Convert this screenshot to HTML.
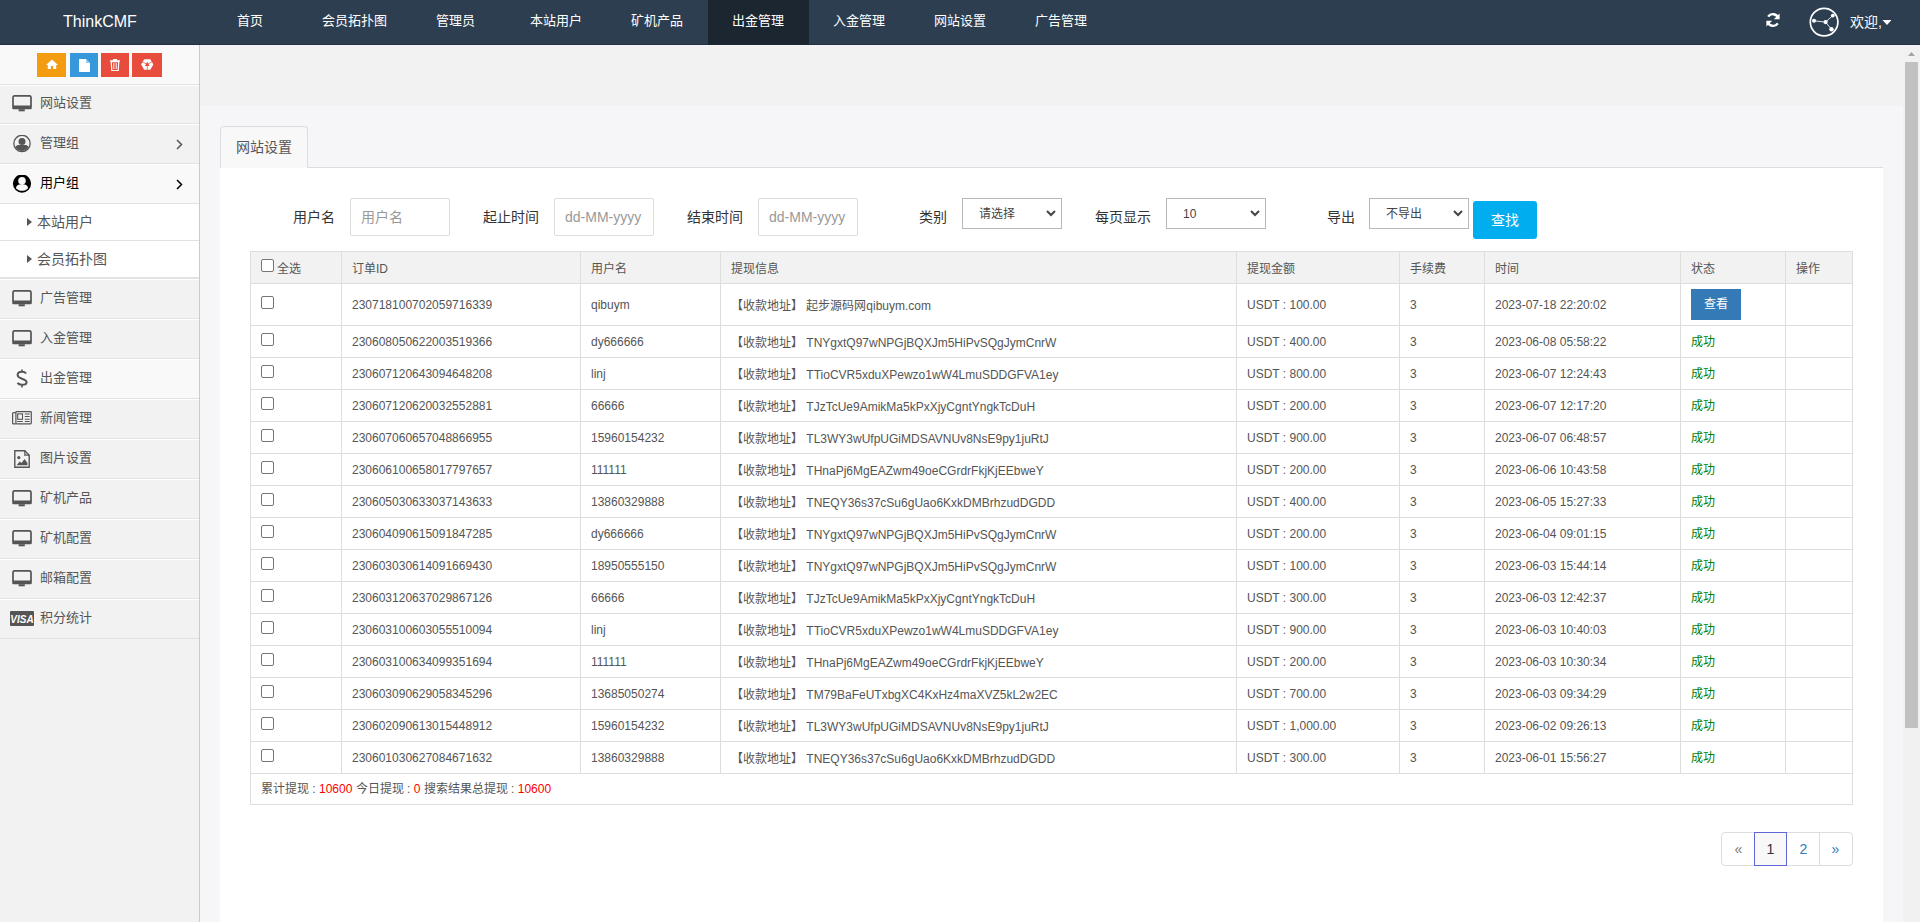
<!DOCTYPE html>
<html lang="zh-CN"><head><meta charset="utf-8"><title>ThinkCMF</title>
<style>
*{box-sizing:border-box;margin:0;padding:0}
html,body{width:1920px;height:922px;overflow:hidden;background:#f6f6f8;font-family:"Liberation Sans",sans-serif;color:#555}
.abs{position:absolute}
#nav{position:absolute;left:0;top:0;width:1920px;height:45px;background:#2c3e50;border-bottom:1px solid #213044}
#nav .t{position:absolute;top:0;height:44px;line-height:41px;color:#fff;font-size:13px;font-weight:500;white-space:nowrap}
#nav .act{position:absolute;left:708px;top:0;width:101px;height:45px;background:#1b2631}
#brand{position:absolute;left:63px;top:0;line-height:43px;font-size:16px;color:#fff}
#side{position:absolute;left:0;top:45px;width:200px;height:877px;background:#f2f2f2;border-right:1px solid #cbcbcb}
#side .top{position:absolute;left:0;top:0;width:199px;height:40px;background:#f9f9f9;border-bottom:1px solid #e0e0e0}
.sb{position:absolute;top:8px;height:24px;color:#fff}
.mi{position:absolute;left:0;width:199px;border-top:1px solid #fff;border-bottom:1px solid #e2e2e2;font-size:13px;color:#555}
.mi .tx{position:absolute;left:40px;white-space:nowrap}
.mi .ic{position:absolute;left:12px}
.sub{position:absolute;left:0;width:199px;background:#fff;border-bottom:1px solid #e2e2e2;font-size:14px;color:#555}
#band{position:absolute;left:200px;top:46px;width:1703px;height:60px;background:#f2f2f2}
#tab{position:absolute;left:220px;top:126px;width:88px;height:42px;background:#f8f8f8;border:1px solid #dcdcdc;border-bottom:none;border-radius:4px 4px 0 0;font-size:14px;color:#555;line-height:40px;padding-left:15px}
#tabline{position:absolute;left:307px;top:167px;width:1576px;height:1px;background:#dcdcdc}
#panel{position:absolute;left:220px;top:168px;width:1663px;height:760px;background:#fff}
.lbl{position:absolute;font-size:14px;color:#333;white-space:nowrap}
.inp{position:absolute;top:198px;width:100px;height:38px;border:1px solid #ddd;border-radius:2px;background:#fff;font-size:14px;color:#999;padding-left:10px;line-height:36px}
.sel{position:absolute;top:198px;width:100px;height:31px;border:1px solid #b9b9b9;background:#fff;font-size:12px;color:#444;line-height:29px}
.sel .v{position:absolute;top:1px}
.sel svg{position:absolute;right:5px;top:11px}
#go{position:absolute;left:1473px;top:201px;width:64px;height:38px;background:#00aeef;border-radius:3px;color:#fff;font-size:14px;font-weight:500;line-height:38px;text-align:center}
table{position:absolute;left:250px;top:251px;border-collapse:collapse;table-layout:fixed;font-size:12px;color:#555}
td,th{border:1px solid #dedede;padding:0 10px;text-align:left;font-weight:normal;white-space:nowrap;vertical-align:middle;overflow:hidden}
th{background:#f2f2f2;height:32px;color:#555}
td{height:32px}
.cb{display:inline-block;width:13px;height:13px;border:1px solid #767676;border-radius:2px;background:#fff;vertical-align:middle;position:relative;top:-3px}
.ok{color:#008000;position:relative;top:-1px}
.btn{display:inline-block;width:50px;height:31px;background:#337ab7;color:#fff;font-weight:500;text-align:center;line-height:31px;font-size:12px}
#foot td{height:31px;padding-left:10px;padding-bottom:3px}
.red{color:#f00}
#pg{position:absolute;left:1721px;top:832px;width:132px;height:34px;border:1px solid #ddd;border-radius:4px;background:#fff;font-size:14px}
#pg .pc{position:absolute;top:-1px;width:33px;height:34px;text-align:center;line-height:35px;color:#337ab7}
#pg .sep{position:absolute;top:-1px;width:1px;height:34px;background:#ddd}
#pg .act{border:1px solid #6066d8;background:#f8f8f8;line-height:33px;width:34px}
#sbar{position:absolute;left:1903px;top:46px;width:17px;height:876px;background:#f1f1f1}
#thumb{position:absolute;left:2px;top:16px;width:13px;height:666px;background:#c1c1c1}
</style></head><body>

<div id="nav"><div class="act"></div><div id="brand">ThinkCMF</div>
<div class="t" style="left:237.0px">首页</div>
<div class="t" style="left:321.9px">会员拓扑图</div>
<div class="t" style="left:435.6px">管理员</div>
<div class="t" style="left:530.2px">本站用户</div>
<div class="t" style="left:631.1px">矿机产品</div>
<div class="t" style="left:732.4px">出金管理</div>
<div class="t" style="left:833.2px">入金管理</div>
<div class="t" style="left:934.3px">网站设置</div>
<div class="t" style="left:1035.2px">广告管理</div>
<svg class="abs" style="left:1765px;top:12px" width="16" height="16" viewBox="0 0 16 16"><path d="M13.2 6.2A5.6 5.6 0 0 0 3.2 4.6" fill="none" stroke="#fff" stroke-width="2.4"/><path d="M14.6 1.4v5.8h-5.8z" fill="#fff"/><path d="M2.8 9.8a5.6 5.6 0 0 0 10 1.6" fill="none" stroke="#fff" stroke-width="2.4"/><path d="M1.4 14.6v-5.8h5.8z" fill="#fff"/></svg>
<svg class="abs" style="left:1808px;top:6px" width="32" height="32" viewBox="0 0 32 32"><circle cx="16.1" cy="16.1" r="13.8" fill="none" stroke="#fff" stroke-width="1.7"/><path d="M6 14.8L17.6 16.1L24.8 9.6M17.6 16.1L23.5 23.3" stroke="#fff" stroke-width="1" fill="none" opacity="0.85"/><circle cx="6" cy="14.8" r="2" fill="#fff"/><circle cx="17.6" cy="16.1" r="2.1" fill="#fff"/><circle cx="24.8" cy="9.6" r="1.9" fill="#fff"/><circle cx="23.5" cy="23.3" r="2.2" fill="#fff"/></svg>
<div class="t" style="left:1850px;top:2px;font-size:14px">欢迎,</div>
<svg class="abs" style="left:1882px;top:20px" width="9" height="6" viewBox="0 0 8 6"><path d="M0 0h9L4.5 5z" fill="#fff"/></svg>

</div>
<div id="side"><div class="top">
<div class="sb" style="left:37px;width:29px;background:#f39c12"><svg class="abs" style="left:9px;top:6px" width="12" height="10" viewBox="0 0 12 10"><path d="M6 0.5L0 6h1.8v4h3V7h2.4v3h3V6H12z" fill="#fff"/></svg></div>
<div class="sb" style="left:70px;width:28px;background:#3498db"><svg class="abs" style="left:8.5px;top:5.5px" width="11" height="13" viewBox="0 0 11 13"><path d="M0 0h7l4 4v9H0z" fill="#fff"/><path d="M7 0v4h4" fill="#3498db" opacity="0.5"/></svg></div>
<div class="sb" style="left:101px;width:28px;background:#e74c3c"><svg class="abs" style="left:9px;top:6px" width="10" height="12" viewBox="0 0 10 12"><path d="M0 1.8h10M3.5 1.8V0.6h3v1.2" stroke="#fff" stroke-width="1.2" fill="none"/><path d="M1.2 2.6h7.6l-0.6 9H1.8z" fill="none" stroke="#fff" stroke-width="1.2"/><path d="M3.8 4v6M6.2 4v6" stroke="#fff" stroke-width="1"/></svg></div>
<div class="sb" style="left:132px;width:30px;background:#e74c3c"><svg class="abs" style="left:8.5px;top:5.5px" width="13" height="12" viewBox="0 0 13 12"><polygon points="12.35,5.50 9.30,10.78 3.20,10.78 0.15,5.50 3.20,0.22 9.30,0.22" fill="#fff"/><path d="M6.25 5.50L6.25 12.00" stroke="#e74c3c" stroke-width="0.7"/><path d="M6.25 5.50L0.62 2.25" stroke="#e74c3c" stroke-width="0.7"/><path d="M6.25 5.50L11.88 2.25" stroke="#e74c3c" stroke-width="0.7"/><path d="M6.25 2.80L3.85 7.00H8.65z" fill="#e74c3c"/></svg></div>
</div>
<div class="mi" style="top:40px;height:39px;color:#555"><div class="ic" style="top:9px"><svg style="position:relative;top:-0.5px" width="20" height="17" viewBox="0 0 20 17"><path d="M1 11V2.4a1.6 1.6 0 0 1 1.6-1.6h14.8a1.6 1.6 0 0 1 1.6 1.6V11" fill="none" stroke="#555" stroke-width="1.7"/><path d="M0.2 10.4h19.6v2.6a1.3 1.3 0 0 1-1.3 1.3H1.5A1.3 1.3 0 0 1 0.2 13z" fill="#555"/><rect x="6.6" y="14.2" width="6.2" height="2.1" fill="#555"/></svg></div><div class="tx" style="top:-2px;line-height:37px">网站设置</div></div>
<div class="mi" style="top:79px;height:40px;color:#555"><div class="ic" style="top:10px"><svg width="20" height="20" viewBox="0 0 20 20"><circle cx="10" cy="8.45" r="8.15" fill="none" stroke="#555" stroke-width="1.3"/><circle cx="10" cy="6.4" r="3.5" fill="#555"/><path d="M3.6 12.4C3.8 11 4.8 10.1 6.3 10.1H13.7C15.2 10.1 16.2 11 16.4 12.4A7.6 7.6 0 0 1 3.6 12.4Z" fill="#555"/></svg></div><div class="tx" style="top:-1px;line-height:38px">管理组</div><svg class="abs" style="left:176px;top:14px" width="7" height="11" viewBox="0 0 7 11"><path d="M1 1l4.5 4.5L1 10" stroke="#555" stroke-width="1.5" fill="none"/></svg></div>
<div class="mi" style="top:119px;height:40px;background:#f9f9f9;color:#000"><div class="ic" style="top:10px"><svg width="20" height="20" viewBox="0 0 20 20"><path fill="#000" fill-rule="evenodd" d="M10 -0.5a9.1 9.1 0 1 1 0 18.2a9.1 9.1 0 1 1 0-18.2zM10 2a3.8 3.8 0 1 0 0 7.6a3.8 3.8 0 1 0 0-7.6zM3.9 13.2C4.3 10.9 5.9 9.6 7.6 9.6H12.4C14.1 9.6 15.7 10.9 16.1 13.2C14.6 14.9 12.4 15.8 10 15.8C7.6 15.8 5.4 14.9 3.9 13.2Z"/></svg></div><div class="tx" style="top:-1px;line-height:38px">用户组</div><svg class="abs" style="left:176px;top:14px" width="7" height="11" viewBox="0 0 7 11"><path d="M1 1l4.5 4.5L1 10" stroke="#000" stroke-width="1.5" fill="none"/></svg></div>
<div class="sub" style="top:159px;height:37px"><svg class="abs" style="left:27px;top:14px" width="5" height="8" viewBox="0 0 5 8"><path d="M0 0l5 4-5 4z" fill="#555"/></svg><div class="abs" style="left:37px;top:0;line-height:36px">本站用户</div></div>
<div class="sub" style="top:196px;height:38px;border-bottom:2px solid #e2e2e2"><svg class="abs" style="left:27px;top:14px" width="5" height="8" viewBox="0 0 5 8"><path d="M0 0l5 4-5 4z" fill="#555"/></svg><div class="abs" style="left:37px;top:0;line-height:36px">会员拓扑图</div></div>
<div class="mi" style="top:234px;height:40px;color:#555"><div class="ic" style="top:10px"><svg style="position:relative;top:-0.5px" width="20" height="17" viewBox="0 0 20 17"><path d="M1 11V2.4a1.6 1.6 0 0 1 1.6-1.6h14.8a1.6 1.6 0 0 1 1.6 1.6V11" fill="none" stroke="#555" stroke-width="1.7"/><path d="M0.2 10.4h19.6v2.6a1.3 1.3 0 0 1-1.3 1.3H1.5A1.3 1.3 0 0 1 0.2 13z" fill="#555"/><rect x="6.6" y="14.2" width="6.2" height="2.1" fill="#555"/></svg></div><div class="tx" style="top:-1px;line-height:38px">广告管理</div></div>
<div class="mi" style="top:274px;height:40px;color:#555"><div class="ic" style="top:10px"><svg style="position:relative;top:-0.5px" width="20" height="17" viewBox="0 0 20 17"><path d="M1 11V2.4a1.6 1.6 0 0 1 1.6-1.6h14.8a1.6 1.6 0 0 1 1.6 1.6V11" fill="none" stroke="#555" stroke-width="1.7"/><path d="M0.2 10.4h19.6v2.6a1.3 1.3 0 0 1-1.3 1.3H1.5A1.3 1.3 0 0 1 0.2 13z" fill="#555"/><rect x="6.6" y="14.2" width="6.2" height="2.1" fill="#555"/></svg></div><div class="tx" style="top:-1px;line-height:38px">入金管理</div></div>
<div class="mi" style="top:314px;height:40px;background:#f9f9f9;color:#555"><div class="ic" style="top:10px"><svg width="19" height="19" viewBox="0 0 19 19" style="overflow:visible"><path d="M14.2 3.5C13.2 2.2 12 1.7 10 1.7C7.4 1.7 5.6 3 5.6 5C5.6 7.4 8 8 10 8.7C12.6 9.6 14.6 10.4 14.6 12.2C14.6 14 12.7 14.8 10 14.8C7.8 14.8 6.4 14.2 5.5 12.9" fill="none" stroke="#555" stroke-width="2"/><path d="M10 -0.6V1.7M10 14.8V17.5" stroke="#555" stroke-width="1.6"/></svg></div><div class="tx" style="top:-1px;line-height:38px">出金管理</div></div>
<div class="mi" style="top:354px;height:40px;color:#555"><div class="ic" style="top:10px"><svg style="position:relative;left:0;top:1px" width="21" height="15" viewBox="0 0 21 15"><rect x="3.9" y="0.6" width="15.4" height="12.3" rx="0.8" fill="none" stroke="#555" stroke-width="1.2"/><path d="M3.9 1.6H1.6Q0.6 1.6 0.6 2.6V11.9Q0.6 12.9 1.6 12.9H3.9" fill="none" stroke="#555" stroke-width="1.2"/><rect x="5.7" y="2.9" width="4.8" height="5.4" fill="none" stroke="#555" stroke-width="1.1"/><path d="M12.8 3H17.7M12.8 5.5H17.7M12.8 8.2H17.7M12.8 10.5H17.7M5.2 10.5H10.8" stroke="#555" stroke-width="1.1"/></svg></div><div class="tx" style="top:-1px;line-height:38px">新闻管理</div></div>
<div class="mi" style="top:394px;height:40px;color:#555"><div class="ic" style="top:10px"><svg style="position:relative;left:2px;top:0px" width="16" height="18" viewBox="0 0 16 18"><path d="M0.8 0.8h10l4.4 4.4v12H0.8z" fill="none" stroke="#555" stroke-width="1.4"/><path d="M10.8 0.8v4.4h4.4" fill="none" stroke="#555" stroke-width="1.2"/><circle cx="4.8" cy="7.6" r="1.6" fill="#555"/><path d="M2.6 15.2l3.2-3.6 1.6 1.3 3.2-3.8 2.8 3.8v2.3z" fill="#555"/></svg></div><div class="tx" style="top:-1px;line-height:38px">图片设置</div></div>
<div class="mi" style="top:434px;height:40px;color:#555"><div class="ic" style="top:10px"><svg style="position:relative;top:-0.5px" width="20" height="17" viewBox="0 0 20 17"><path d="M1 11V2.4a1.6 1.6 0 0 1 1.6-1.6h14.8a1.6 1.6 0 0 1 1.6 1.6V11" fill="none" stroke="#555" stroke-width="1.7"/><path d="M0.2 10.4h19.6v2.6a1.3 1.3 0 0 1-1.3 1.3H1.5A1.3 1.3 0 0 1 0.2 13z" fill="#555"/><rect x="6.6" y="14.2" width="6.2" height="2.1" fill="#555"/></svg></div><div class="tx" style="top:-1px;line-height:38px">矿机产品</div></div>
<div class="mi" style="top:474px;height:40px;color:#555"><div class="ic" style="top:10px"><svg style="position:relative;top:-0.5px" width="20" height="17" viewBox="0 0 20 17"><path d="M1 11V2.4a1.6 1.6 0 0 1 1.6-1.6h14.8a1.6 1.6 0 0 1 1.6 1.6V11" fill="none" stroke="#555" stroke-width="1.7"/><path d="M0.2 10.4h19.6v2.6a1.3 1.3 0 0 1-1.3 1.3H1.5A1.3 1.3 0 0 1 0.2 13z" fill="#555"/><rect x="6.6" y="14.2" width="6.2" height="2.1" fill="#555"/></svg></div><div class="tx" style="top:-1px;line-height:38px">矿机配置</div></div>
<div class="mi" style="top:514px;height:40px;color:#555"><div class="ic" style="top:10px"><svg style="position:relative;top:-0.5px" width="20" height="17" viewBox="0 0 20 17"><path d="M1 11V2.4a1.6 1.6 0 0 1 1.6-1.6h14.8a1.6 1.6 0 0 1 1.6 1.6V11" fill="none" stroke="#555" stroke-width="1.7"/><path d="M0.2 10.4h19.6v2.6a1.3 1.3 0 0 1-1.3 1.3H1.5A1.3 1.3 0 0 1 0.2 13z" fill="#555"/><rect x="6.6" y="14.2" width="6.2" height="2.1" fill="#555"/></svg></div><div class="tx" style="top:-1px;line-height:38px">邮箱配置</div></div>
<div class="mi" style="top:554px;height:40px;color:#555"><div class="ic" style="top:10px"><svg style="position:relative;left:-2px;top:1px" width="24" height="15" viewBox="0 0 24 15"><rect x="0" y="0" width="24" height="15" rx="1" fill="#555"/><text x="12" y="11.6" font-family="Liberation Sans" font-size="10" font-weight="bold" font-style="italic" fill="#fff" text-anchor="middle">VISA</text></svg></div><div class="tx" style="top:-1px;line-height:38px">积分统计</div></div>
</div>
<div id="band"></div><div id="tab">网站设置</div><div id="tabline"></div><div id="panel"></div>
<div class="lbl" style="left:293px;top:206px">用户名</div><div class="inp" style="left:350px">用户名</div>
<div class="lbl" style="left:483px;top:206px">起止时间</div><div class="inp" style="left:554px">dd-MM-yyyy</div>
<div class="lbl" style="left:687px;top:206px">结束时间</div><div class="inp" style="left:758px">dd-MM-yyyy</div>
<div class="lbl" style="left:919px;top:206px">类别</div><div class="sel" style="left:962px"><div class="v" style="left:16px">请选择</div><svg width="10" height="7" viewBox="0 0 10 7"><path d="M1 1l4 4 4-4" stroke="#444" stroke-width="2" fill="none"/></svg></div>
<div class="lbl" style="left:1095px;top:206px">每页显示</div><div class="sel" style="left:1166px"><div class="v" style="left:16px">10</div><svg width="10" height="7" viewBox="0 0 10 7"><path d="M1 1l4 4 4-4" stroke="#444" stroke-width="2" fill="none"/></svg></div>
<div class="lbl" style="left:1327px;top:206px">导出</div><div class="sel" style="left:1369px"><div class="v" style="left:16px">不导出</div><svg width="10" height="7" viewBox="0 0 10 7"><path d="M1 1l4 4 4-4" stroke="#444" stroke-width="2" fill="none"/></svg></div>
<div id="go">查找</div>
<table><colgroup><col style="width:91px"><col style="width:239px"><col style="width:140px"><col style="width:516px"><col style="width:163px"><col style="width:85px"><col style="width:196px"><col style="width:105px"><col style="width:67px"></colgroup>
<tr><th><span class="cb" style="top:-4px"></span> 全选</th><th>订单ID</th><th>用户名</th><th>提现信息</th><th>提现金额</th><th>手续费</th><th>时间</th><th>状态</th><th>操作</th></tr>
<tr style="height:42px"><td style="height:42px"><span class="cb"></span></td><td>230718100702059716339</td><td>qibuym</td><td>【收款地址】 起步源码网qibuym.com</td><td>USDT : 100.00</td><td>3</td><td>2023-07-18 22:20:02</td><td><span class="btn">查看</span></td><td></td></tr>
<tr style="height:32px"><td style="height:32px"><span class="cb"></span></td><td>230608050622003519366</td><td>dy666666</td><td>【收款地址】 TNYgxtQ97wNPGjBQXJm5HiPvSQgJymCnrW</td><td>USDT : 400.00</td><td>3</td><td>2023-06-08 05:58:22</td><td><span class="ok">成功</span></td><td></td></tr>
<tr style="height:32px"><td style="height:32px"><span class="cb"></span></td><td>230607120643094648208</td><td>linj</td><td>【收款地址】 TTioCVR5xduXPewzo1wW4LmuSDDGFVA1ey</td><td>USDT : 800.00</td><td>3</td><td>2023-06-07 12:24:43</td><td><span class="ok">成功</span></td><td></td></tr>
<tr style="height:32px"><td style="height:32px"><span class="cb"></span></td><td>230607120620032552881</td><td>66666</td><td>【收款地址】 TJzTcUe9AmikMa5kPxXjyCgntYngkTcDuH</td><td>USDT : 200.00</td><td>3</td><td>2023-06-07 12:17:20</td><td><span class="ok">成功</span></td><td></td></tr>
<tr style="height:32px"><td style="height:32px"><span class="cb"></span></td><td>230607060657048866955</td><td>15960154232</td><td>【收款地址】 TL3WY3wUfpUGiMDSAVNUv8NsE9py1juRtJ</td><td>USDT : 900.00</td><td>3</td><td>2023-06-07 06:48:57</td><td><span class="ok">成功</span></td><td></td></tr>
<tr style="height:32px"><td style="height:32px"><span class="cb"></span></td><td>230606100658017797657</td><td>111111</td><td>【收款地址】 THnaPj6MgEAZwm49oeCGrdrFkjKjEEbweY</td><td>USDT : 200.00</td><td>3</td><td>2023-06-06 10:43:58</td><td><span class="ok">成功</span></td><td></td></tr>
<tr style="height:32px"><td style="height:32px"><span class="cb"></span></td><td>230605030633037143633</td><td>13860329888</td><td>【收款地址】 TNEQY36s37cSu6gUao6KxkDMBrhzudDGDD</td><td>USDT : 400.00</td><td>3</td><td>2023-06-05 15:27:33</td><td><span class="ok">成功</span></td><td></td></tr>
<tr style="height:32px"><td style="height:32px"><span class="cb"></span></td><td>230604090615091847285</td><td>dy666666</td><td>【收款地址】 TNYgxtQ97wNPGjBQXJm5HiPvSQgJymCnrW</td><td>USDT : 200.00</td><td>3</td><td>2023-06-04 09:01:15</td><td><span class="ok">成功</span></td><td></td></tr>
<tr style="height:32px"><td style="height:32px"><span class="cb"></span></td><td>230603030614091669430</td><td>18950555150</td><td>【收款地址】 TNYgxtQ97wNPGjBQXJm5HiPvSQgJymCnrW</td><td>USDT : 100.00</td><td>3</td><td>2023-06-03 15:44:14</td><td><span class="ok">成功</span></td><td></td></tr>
<tr style="height:32px"><td style="height:32px"><span class="cb"></span></td><td>230603120637029867126</td><td>66666</td><td>【收款地址】 TJzTcUe9AmikMa5kPxXjyCgntYngkTcDuH</td><td>USDT : 300.00</td><td>3</td><td>2023-06-03 12:42:37</td><td><span class="ok">成功</span></td><td></td></tr>
<tr style="height:32px"><td style="height:32px"><span class="cb"></span></td><td>230603100603055510094</td><td>linj</td><td>【收款地址】 TTioCVR5xduXPewzo1wW4LmuSDDGFVA1ey</td><td>USDT : 900.00</td><td>3</td><td>2023-06-03 10:40:03</td><td><span class="ok">成功</span></td><td></td></tr>
<tr style="height:32px"><td style="height:32px"><span class="cb"></span></td><td>230603100634099351694</td><td>111111</td><td>【收款地址】 THnaPj6MgEAZwm49oeCGrdrFkjKjEEbweY</td><td>USDT : 200.00</td><td>3</td><td>2023-06-03 10:30:34</td><td><span class="ok">成功</span></td><td></td></tr>
<tr style="height:32px"><td style="height:32px"><span class="cb"></span></td><td>230603090629058345296</td><td>13685050274</td><td>【收款地址】 TM79BaFeUTxbgXC4KxHz4maXVZ5kL2w2EC</td><td>USDT : 700.00</td><td>3</td><td>2023-06-03 09:34:29</td><td><span class="ok">成功</span></td><td></td></tr>
<tr style="height:32px"><td style="height:32px"><span class="cb"></span></td><td>230602090613015448912</td><td>15960154232</td><td>【收款地址】 TL3WY3wUfpUGiMDSAVNUv8NsE9py1juRtJ</td><td>USDT : 1,000.00</td><td>3</td><td>2023-06-02 09:26:13</td><td><span class="ok">成功</span></td><td></td></tr>
<tr style="height:32px"><td style="height:32px"><span class="cb"></span></td><td>230601030627084671632</td><td>13860329888</td><td>【收款地址】 TNEQY36s37cSu6gUao6KxkDMBrhzudDGDD</td><td>USDT : 300.00</td><td>3</td><td>2023-06-01 15:56:27</td><td><span class="ok">成功</span></td><td></td></tr>
<tr id="foot"><td colspan="9">累计提现 : <span class="red">10600</span> 今日提现 : <span class="red">0</span> 搜索结果总提现 : <span class="red">10600</span></td></tr>
</table>
<div id="pg"><div class="pc" style="left:0;color:#777">&laquo;</div><div class="pc act" style="left:32px;color:#333;width:33px">1</div><div class="pc" style="left:65px">2</div><div class="sep" style="left:97px"></div><div class="pc" style="left:97px">&raquo;</div></div>
<div id="sbar"><svg class="abs" style="left:5px;top:6px" width="7" height="4" viewBox="0 0 7 4"><path d="M0 4L3.5 0L7 4z" fill="#a3a3a3"/></svg><div id="thumb"></div></div>
</body></html>
